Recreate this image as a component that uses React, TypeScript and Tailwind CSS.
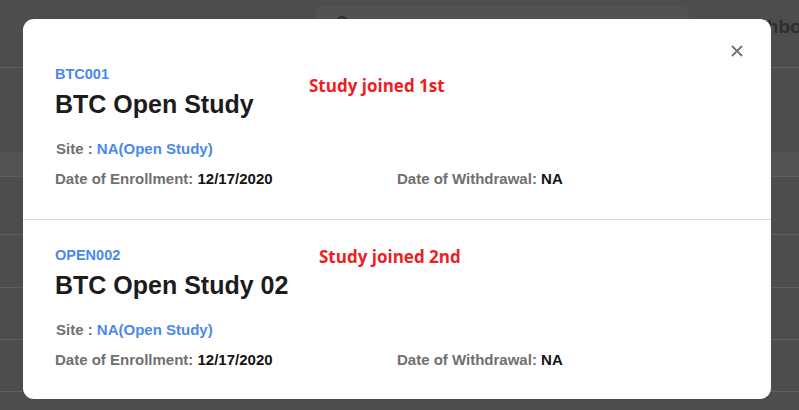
import React from "react";

const font = { fontFamily: '"Liberation Sans", Arial, sans-serif' };

function Section({
  code,
  title,
  note,
  first,
}: {
  code: string;
  title: string;
  note: string;
  first?: boolean;
}) {
  return (
    <div
      className={
        "relative pl-[32px] " +
        (first ? "pt-[46px] pb-[30px] border-b border-[#d3d8e2]" : "pt-[26px] pb-[29px]")
      }
    >
      <div className="text-[14.5px] leading-[18px] font-bold text-[#4a88ee]">{code}</div>
      <div className="mt-[6px] text-[25px] leading-[30px] font-bold text-[#1c1c1c]">{title}</div>
      <div className="mt-[20px] text-[15px] leading-[20px] font-bold text-[#707070] pl-[1px]">
        Site : <span className="text-[#4a88ee]">NA(Open Study)</span>
      </div>
      <div className="mt-[10px] flex text-[15px] leading-[20px] font-bold">
        <div className="w-[342px] text-[#707070]">
          Date of Enrollment: <span className="text-[#141414]">12/17/2020</span>
        </div>
        <div className="text-[#707070]">
          Date of Withdrawal: <span className="text-[#141414]">NA</span>
        </div>
      </div>
      <div
        className={
          "absolute text-[17px] leading-[22px] font-bold text-[#ee1c24] " +
          (first ? "left-[286px] top-[56px]" : "left-[296px] top-[26px]")
        }
        style={{ fontFamily: '"Open Sans", sans-serif' }}
      >
        {note}
      </div>
    </div>
  );
}

export default function App() {
  return (
    <div className="relative w-[799px] h-[410px] overflow-hidden bg-[#4d4d4d]" style={font}>
      {/* background page under overlay */}
      <div className="flex flex-col">
        <div className="h-[68px] border-b border-[#5a5f68] relative flex">
          <div className="shrink-0 ml-[316px] mt-[6px] w-[373px] h-[40px] rounded-[8px] bg-[#515351] flex items-start pl-[20px] pt-[10px]">
            <div className="w-[12px] h-[12px] rounded-full border-2 border-[#2a2a2a]" />
          </div>
          <div className="shrink-0 ml-[43px] mt-[13px] text-[19px] font-bold text-[#2e2e2e] whitespace-nowrap">
            Dashboard
          </div>
        </div>
        <div className="h-[84px]" />
        <div className="h-[25px] bg-[#535353] border-b border-[#5a5f68]" />
        <div className="h-[58px] border-b border-[#5a5f68]" />
        <div className="h-[53px] border-b border-[#5a5f68]" />
        <div className="h-[52px] border-b border-[#5a5f68]" />
        <div className="h-[52px] border-b border-[#5a5f68]" />
      </div>

      {/* modal */}
      <div className="absolute left-[23px] top-[19px] w-[748px] h-[380px] bg-white rounded-[11px]">
        <button className="absolute right-[28px] top-[26px] w-[12px] h-[12px] text-[#6e7783]">
          <svg viewBox="0 0 12 12" width="12" height="12" fill="none" stroke="currentColor" strokeWidth="2">
            <path d="M1 1 L11 11 M11 1 L1 11" />
          </svg>
        </button>
        <Section code="BTC001" title="BTC Open Study" note="Study joined 1st" first />
        <Section code="OPEN002" title="BTC Open Study 02" note="Study joined 2nd" />
      </div>
    </div>
  );
}
